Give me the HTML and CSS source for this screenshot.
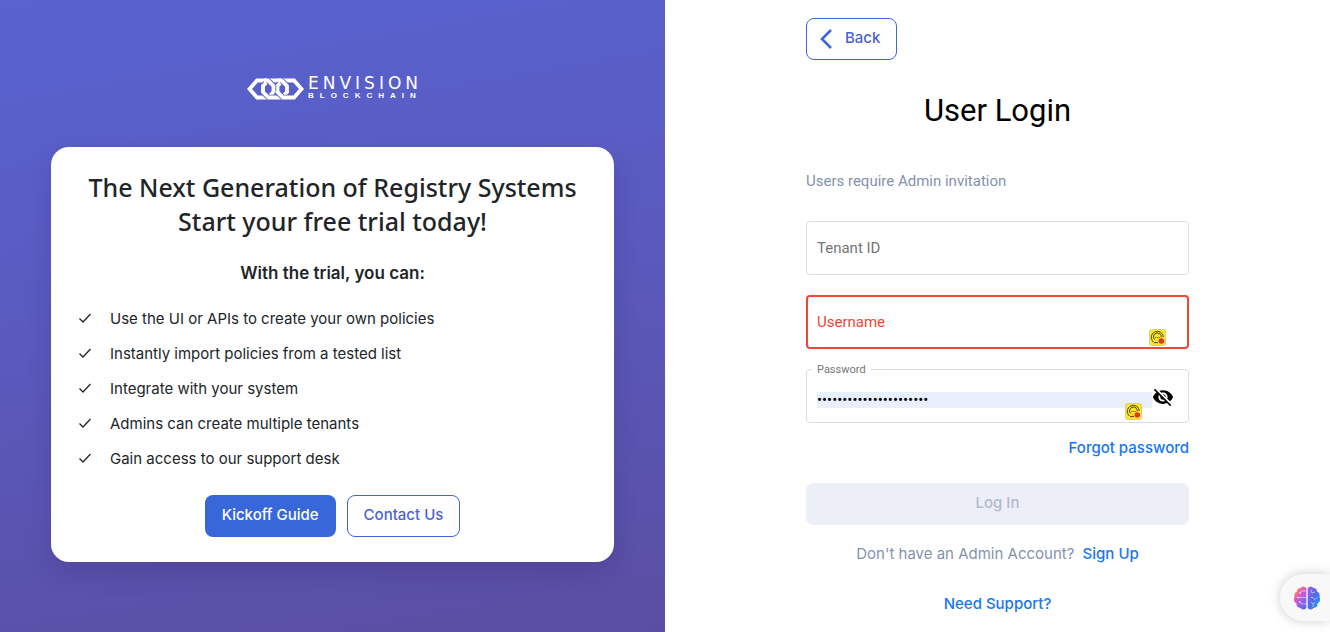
FILE: index.html
```html
<!DOCTYPE html>
<html lang="en">
<head>
<meta charset="utf-8">
<meta name="viewport" content="width=device-width, initial-scale=1">
<title>User Login</title>
<link rel="stylesheet" href="styles.css">
</head>
<body>
<svg width="0" height="0" class="defs" aria-hidden="true">
  <symbol id="check" viewBox="0 0 14 14"><path d="M1.500 7.500 5 11 12.500 3" fill="none" stroke="currentColor" stroke-width="1.300"/></symbol>
  <symbol id="recorder" viewBox="0 0 17 17">
    <rect x=".5" y=".5" width="16" height="16" rx="2" fill="#ffe52e" stroke="#d8cf86"/>
    <path d="M4.500 13A6 6 0 1 1 14.300 8M5.500 10.500A3.900 3.900 0 1 1 12.300 8.200M5 13.600h4" fill="none" stroke="#4a4514" stroke-width="1"/>
    <path d="M6.300 8.500h1m1 0h1m1 0h.8" stroke="#4a4514" stroke-width="1"/>
    <circle cx="12.300" cy="12" r="2.800" fill="#e0371f"/>
  </symbol>
</svg>
<main class="page">
  <section class="promo">
    <div class="logo">
      <svg class="logo-mark" viewBox="0 0 57 22" aria-hidden="true">
        <g fill="none" stroke-linejoin="miter">
          <path d="M10 2.500h11l5.500 5.500v6L21 19.500H10L2.500 11z" stroke="#fff" stroke-width="3.800"/>
          <path d="M21.500 2.500h13L40 8v6l-5.500 5.500h-13L16 14V8z" stroke="#5a60cb" stroke-width="5.600"/>
          <path d="M21.500 2.500h13L40 8v6l-5.500 5.500h-13L16 14V8z" stroke="#fff" stroke-width="3.800"/>
          <path d="M47 2.500H36L30.500 8v6l5.500 5.500h11l7.500-8.500z" stroke="#5a60cb" stroke-width="5.600"/>
          <path d="M47 2.500H36L30.500 8v6l5.500 5.500h11l7.500-8.500z" stroke="#fff" stroke-width="3.800"/>
          <path d="M20 2.500h1L26.500 8v5" stroke="#5a60cb" stroke-width="5.600"/>
          <path d="M17 2.500h4L26.500 8v6" stroke="#fff" stroke-width="3.800"/>
          <path d="M34 2.500h.5L40 8v5" stroke="#5a60cb" stroke-width="5.600"/>
          <path d="M31 2.500h3.500L40 8v6" stroke="#fff" stroke-width="3.800"/>
        </g>
      </svg>
      <div class="logo-words"><span class="logo-name">ENVISION</span><span class="logo-sub">BLOCKCHAIN</span></div>
    </div>
    <div class="card">
      <h2 class="card-title">The Next Generation of Registry Systems<br>Start your free trial today!</h2>
      <h3 class="card-subtitle">With the trial, you can:</h3>
      <ul class="benefits">
        <li><svg class="check"><use href="#check"/></svg>Use the UI or APIs to create your own policies</li>
        <li><svg class="check"><use href="#check"/></svg>Instantly import policies from a tested list</li>
        <li><svg class="check"><use href="#check"/></svg>Integrate with your system</li>
        <li><svg class="check"><use href="#check"/></svg>Admins can create multiple tenants</li>
        <li><svg class="check"><use href="#check"/></svg>Gain access to our support desk</li>
      </ul>
      <div class="actions">
        <button type="button" class="btn btn-primary">Kickoff Guide</button>
        <button type="button" class="btn btn-outline">Contact Us</button>
      </div>
    </div>
  </section>
  <section class="login">
    <form class="form">
      <button type="button" class="btn btn-outline back"><svg class="chevron" viewBox="0 0 12 20"><path d="M11 1 2 10l9 9" fill="none" stroke="#3c67d8" stroke-width="2.600"/></svg>Back</button>
      <h1 class="title">User Login</h1>
      <p class="note">Users require Admin invitation</p>
      <div class="field">
        <label class="label" for="tenant">Tenant ID</label>
        <input class="input" id="tenant" type="text">
      </div>
      <div class="field field-error">
        <label class="label" for="username">Username</label>
        <input class="input" id="username" type="text">
        <svg class="recorder"><use href="#recorder"/></svg>
      </div>
      <div class="field field-filled">
        <label class="label" for="password">Password</label>
        <input class="input" id="password" type="password" value="abcdefghijklmnopqrstuv">
        <button type="button" class="toggle" aria-label="Show password">
          <svg class="eye" viewBox="0 0 24 24"><path d="M12 7c2.760 0 5 2.240 5 5 0 .65-.13 1.260-.36 1.830l2.920 2.920c1.510-1.260 2.700-2.890 3.430-4.750-1.730-4.390-6-7.500-11-7.500-1.400 0-2.740.25-3.980.7l2.160 2.160C10.740 7.130 11.350 7 12 7zM2 4.270l2.280 2.280.46.46C3.080 8.300 1.780 10.020 1 12c1.730 4.390 6 7.500 11 7.500 1.550 0 3.030-.3 4.380-.84l.42.42L19.730 22 21 20.730 3.270 3 2 4.270zM7.530 9.800l1.550 1.550c-.05.21-.08.43-.08.65 0 1.660 1.340 3 3 3 .22 0 .44-.03.65-.08l1.550 1.550c-.67.33-1.410.53-2.200.53-2.760 0-5-2.240-5-5 0-.79.2-1.530.53-2.200zm4.310-.78 3.150 3.150.02-.16c0-1.660-1.340-3-3-3l-.17.010z"/></svg>
        </button>
        <svg class="recorder recorder-inner"><use href="#recorder"/></svg>
      </div>
      <a class="link forgot" href="#">Forgot password</a>
      <button type="submit" class="btn btn-login" disabled>Log In</button>
      <p class="signup">Don't have an Admin Account? <a class="link" href="#">Sign Up</a></p>
      <a class="link support" href="#">Need Support?</a>
    </form>
  </section>
</main>
<button type="button" class="assistant" aria-label="Open assistant">
  <svg class="brain" viewBox="0 0 26 24">
    <defs>
      <linearGradient id="brain-left" x1="0" y1="0" x2=".7" y2="1"><stop offset="0" stop-color="#ff8a1f"/><stop offset=".2" stop-color="#ff8a3f"/><stop offset=".45" stop-color="#df58cb"/><stop offset="1" stop-color="#6265ff"/></linearGradient>
      <linearGradient id="brain-right" x1="0" y1="0" x2="1" y2="1"><stop offset="0" stop-color="#a05ae8"/><stop offset=".5" stop-color="#536cf0"/><stop offset="1" stop-color="#08a8ff"/></linearGradient>
    </defs>
    <path d="M12.300 2v20Q9.500 25 6.500 22 2 21.500 2.500 17.500-1.500 15 .5 11-.5 7 3 5.500 3 2 6.500 2 9-1 12.300 2z" fill="url(#brain-left)"/>
    <path d="M13.700 2v20q2.800 3 5.800 0 4.500-.5 4-4.500 4-2.500 2-6.500 1-4-2.500-5.500 0-3.500-3.500-3.500-2.500-3-5.800 0z" fill="url(#brain-right)"/>
    <g fill="none" stroke="#fff" stroke-opacity=".75" stroke-width=".7"><path d="M12 5H8L6 7M12 11.500H3.500M12 18H8l-2-2M17 11.500h2l2 2 2-2M17 4l1 3 3-1M17 16l2 2 2-2m-2 2v3"/></g>
    <g fill="#fff"><circle cx="6" cy="7" r=".8"/><circle cx="4" cy="11.500" r=".8"/><circle cx="6" cy="16" r=".8"/></g>
  </svg>
</button>
</body>
</html>
```
FILE: styles.css
```css
* { box-sizing: border-box; }
body { margin: 0; background: #fff; font-family: Inter, "Liberation Sans", sans-serif; font-size: 15px; line-height: 24px; color: #212529; }
h1, h2, h3, p, ul { margin: 0; padding: 0; font-weight: 400; }
.defs { position: absolute; }
.page { display: grid; grid-template-columns: 1fr 1fr; min-height: 100vh; }

.promo { padding: 77px 51px 24px; background: linear-gradient(170deg, #5863d0 0%, #5a5cc3 35%, #5a4ea2 100%); }
.logo { display: flex; justify-content: center; gap: 4px; height: 24px; margin-bottom: 46px; color: #fff; }
.logo-mark { width: 57px; height: 22px; margin-top: 1px; }
.logo-words { display: flex; flex-direction: column; gap: 3px; }
.logo-name { font-family: "DejaVu Sans", sans-serif; font-size: 17px; line-height: 12px; letter-spacing: 4px; margin-right: -4px; }
.logo-sub { font-family: "Liberation Sans", sans-serif; font-size: 8px; line-height: 8px; font-weight: 700; letter-spacing: 6px; margin-right: -6px; }
.card { padding: 23px 24px 25px; border-radius: 18px; background: #fff; box-shadow: 0 12px 24px rgba(30, 20, 80, .16); }
.card-title { font-family: "Noto Sans", sans-serif; font-size: 25px; line-height: 34px; font-weight: 500; text-align: center; }
.card-subtitle { margin-top: 23px; font-size: 17px; line-height: 24px; font-weight: 600; text-align: center; }
.benefits { display: grid; gap: 11px; margin: 22px 0 24px; list-style: none; }
.benefits li { display: flex; align-items: center; gap: 18px; padding-left: 3px; }
.check { width: 14px; height: 14px; margin-bottom: 2px; }
.actions { display: flex; justify-content: center; gap: 11px; }

.btn { height: 42px; padding: 0 16px 2px; border: 1px solid transparent; border-radius: 8px; font: 500 15px/24px Inter, "Liberation Sans", sans-serif; }
.btn-primary { background: #3767d9; color: #fff; }
.btn-outline { background: #fff; border-color: #3c67d8; color: #4c5fd7; }

.login { display: flex; justify-content: center; padding: 18px 24px 16px; }
.form { display: flex; flex-direction: column; width: 100%; max-width: 383px; }
.back { display: flex; align-items: center; align-self: flex-start; gap: 13px; padding: 0 16px 2px 13px; }
.chevron { width: 12px; height: 20px; margin-top: 2px; }
.title { margin-top: 31px; font: 400 31px/40px Roboto, sans-serif; color: #000; text-align: center; }
.note { margin: 38px 0 28px; font: 400 15px/24px Roboto, sans-serif; color: #8592ad; }
.field { position: relative; display: flex; align-items: center; height: 54px; margin-bottom: 20px; padding: 0 11px; border: 1px solid #dedede; border-radius: 4px; font-family: Roboto, sans-serif; }
.label { position: absolute; left: 10px; font-size: 15px; line-height: 20px; color: #757575; pointer-events: none; }
.input { flex: 1; min-width: 0; height: 16px; padding: 0; border: 0; outline: 0; background: transparent; font: 400 15px/16px Roboto, sans-serif; color: #000; }
.field-error { border: 2px solid #ef4638; padding: 0 10px; }
.field-error .label { left: 9px; color: #ef4638; }
.field-filled { margin-bottom: 13px; padding: 8px 14px 0 10px; }
.field-filled .label { top: -8px; left: 5px; padding: 0 5px; background: #fff; font-size: 11px; line-height: 16px; }
.field-filled .input { background: #e8f0fe; }
.toggle { display: flex; width: 22px; height: 22px; margin-top: -6px; padding: 0; border: 0; background: transparent; }
.eye { width: 22px; height: 22px; }
.recorder { position: absolute; right: 21px; bottom: 1px; width: 17px; height: 17px; }
.recorder-inner { right: 46px; bottom: 2px; }
.link { color: #1976f2; font-weight: 500; text-decoration: none; }
.forgot { align-self: flex-end; }
.btn-login { margin-top: 23px; background: #eceff8; color: #b4b9cb; }
.signup { margin-top: 17px; color: #8592ad; text-align: center; }
.signup .link { margin-left: 4px; }
.support { align-self: center; margin-top: 26px; }

.assistant { position: fixed; right: 0; bottom: 11px; display: flex; align-items: center; width: 50px; height: 47px; padding: 0 0 0 14px; border: 0; border-radius: 24px 0 0 24px; background: #f8f8f8; box-shadow: 0 0 12px rgba(0, 0, 0, .2); }
.brain { width: 26px; height: 24px; flex: none; }
```
